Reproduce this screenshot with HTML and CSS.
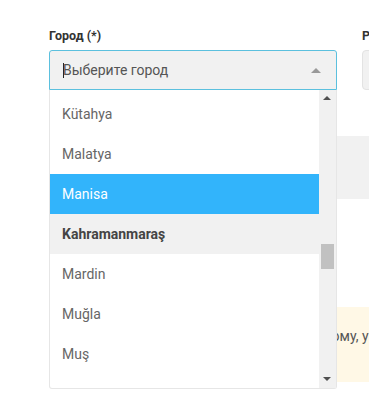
FILE: index.html
```html
<!DOCTYPE html>
<html lang="ru">
<head>
    <meta charset="UTF-8">
    <meta name="viewport" content="width=device-width, initial-scale=1.0">
    <title>Город</title>
    <link rel="stylesheet" href="styles.css">
</head>
<body>
    <main class="form">
        <div class="row">
            <div class="field city">
                <label class="label">Город (*)</label>
                <div class="select open">
                    <span class="caret"></span>
                    <span class="placeholder">Выберите город</span>
                    <span class="arrow"></span>
                </div>
                <div class="dropdown">
                    <div class="list">
                        <ul class="options">
                            <li>Konya</li>
                            <li>Kütahya</li>
                            <li>Malatya</li>
                            <li class="active">Manisa</li>
                            <li class="group">Kahramanmaraş</li>
                            <li>Mardin</li>
                            <li>Muğla</li>
                            <li>Muş</li>
                            <li>Nevşehir</li>
                        </ul>
                    </div>
                    <div class="scrollbar">
                        <span class="sb-up"></span>
                        <span class="sb-thumb"></span>
                        <span class="sb-down"></span>
                    </div>
                </div>
            </div>
            <div class="field region">
                <label class="label">Район</label>
                <div class="select"></div>
            </div>
        </div>
        <div class="block"></div>
        <div class="alert">Если вашего города нет в списке, поэтому, укажите адрес доставки.</div>
    </main>
</body>
</html>
```

FILE: styles.css
```css
body {
    margin: 0;
    font-family: Roboto, "Liberation Sans", sans-serif;
    background: #fff;
    overflow: hidden;
    width: 369px;
    height: 419px;
}
.form {
    padding: 28px 0 0 49px;
    width: 700px;
}
.row {
    display: flex;
    gap: 25px;
}
.field {
    position: relative;
}
.city {
    width: 288px;
}
.region {
    width: 300px;
}
.label {
    display: block;
    font-size: 12.5px;
    font-weight: bold;
    color: #333;
    line-height: 16px;
    margin-bottom: 6px;
}
.select {
    height: 40px;
    box-sizing: border-box;
    border: 1px solid #e3e3e3;
    border-radius: 4px;
    background: #f1f1f1;
    display: flex;
    align-items: center;
    padding: 0 12px 0 13px;
    position: relative;
}
.select.open {
    border-color: #5bc0de;
    border-radius: 3px 3px 0 0;
}
.caret {
    width: 1px;
    height: 15px;
    background: #222;
    margin-right: -1px;
}
.placeholder {
    font-size: 14px;
    color: #555;
    flex: 1;
}
.arrow {
    width: 0;
    height: 0;
    border-left: 5px solid transparent;
    border-right: 5px solid transparent;
    border-bottom: 5px solid #999;
    margin-right: 3px;
}
.dropdown {
    position: absolute;
    left: 0;
    top: 62px;
    width: 288px;
    height: 299px;
    box-sizing: border-box;
    background: #fff;
    border: 1px solid #e6e6e6;
    border-top: none;
    border-radius: 0 0 3px 3px;
    display: flex;
    z-index: 2;
}
.list {
    flex: 1;
    overflow: hidden;
}
.options {
    list-style: none;
    margin: -36px 0 0 0;
    padding: 0;
}
.options li {
    height: 40px;
    line-height: 40px;
    padding-left: 12px;
    font-size: 14px;
    color: #666;
}
.options li.active {
    background: #32b4fb;
    color: #fff;
}
.options li.group {
    background: #f1f1f1;
    color: #444;
    font-weight: bold;
}
.scrollbar {
    width: 17px;
    background: #f1f1f1;
    position: relative;
}
.sb-up, .sb-down {
    position: absolute;
    left: 4px;
    width: 0;
    height: 0;
    border-left: 4px solid transparent;
    border-right: 4px solid transparent;
}
.sb-up {
    top: 6px;
    border-bottom: 4px solid #505050;
}
.sb-down {
    bottom: 7px;
    border-top: 4px solid #505050;
}
.sb-thumb {
    position: absolute;
    left: 2px;
    top: 154px;
    width: 13px;
    height: 25px;
    background: #c1c1c1;
}
.block {
    margin-top: 46px;
    height: 63px;
    background: #f1f1f1;
}
.alert {
    margin-top: 108px;
    height: 75px;
    box-sizing: border-box;
    background: #fff8e6;
    border-radius: 3px;
    padding: 20px 0 0 29px;
    font-size: 14px;
    line-height: 18px;
    color: #555;
    white-space: nowrap;
}
```
